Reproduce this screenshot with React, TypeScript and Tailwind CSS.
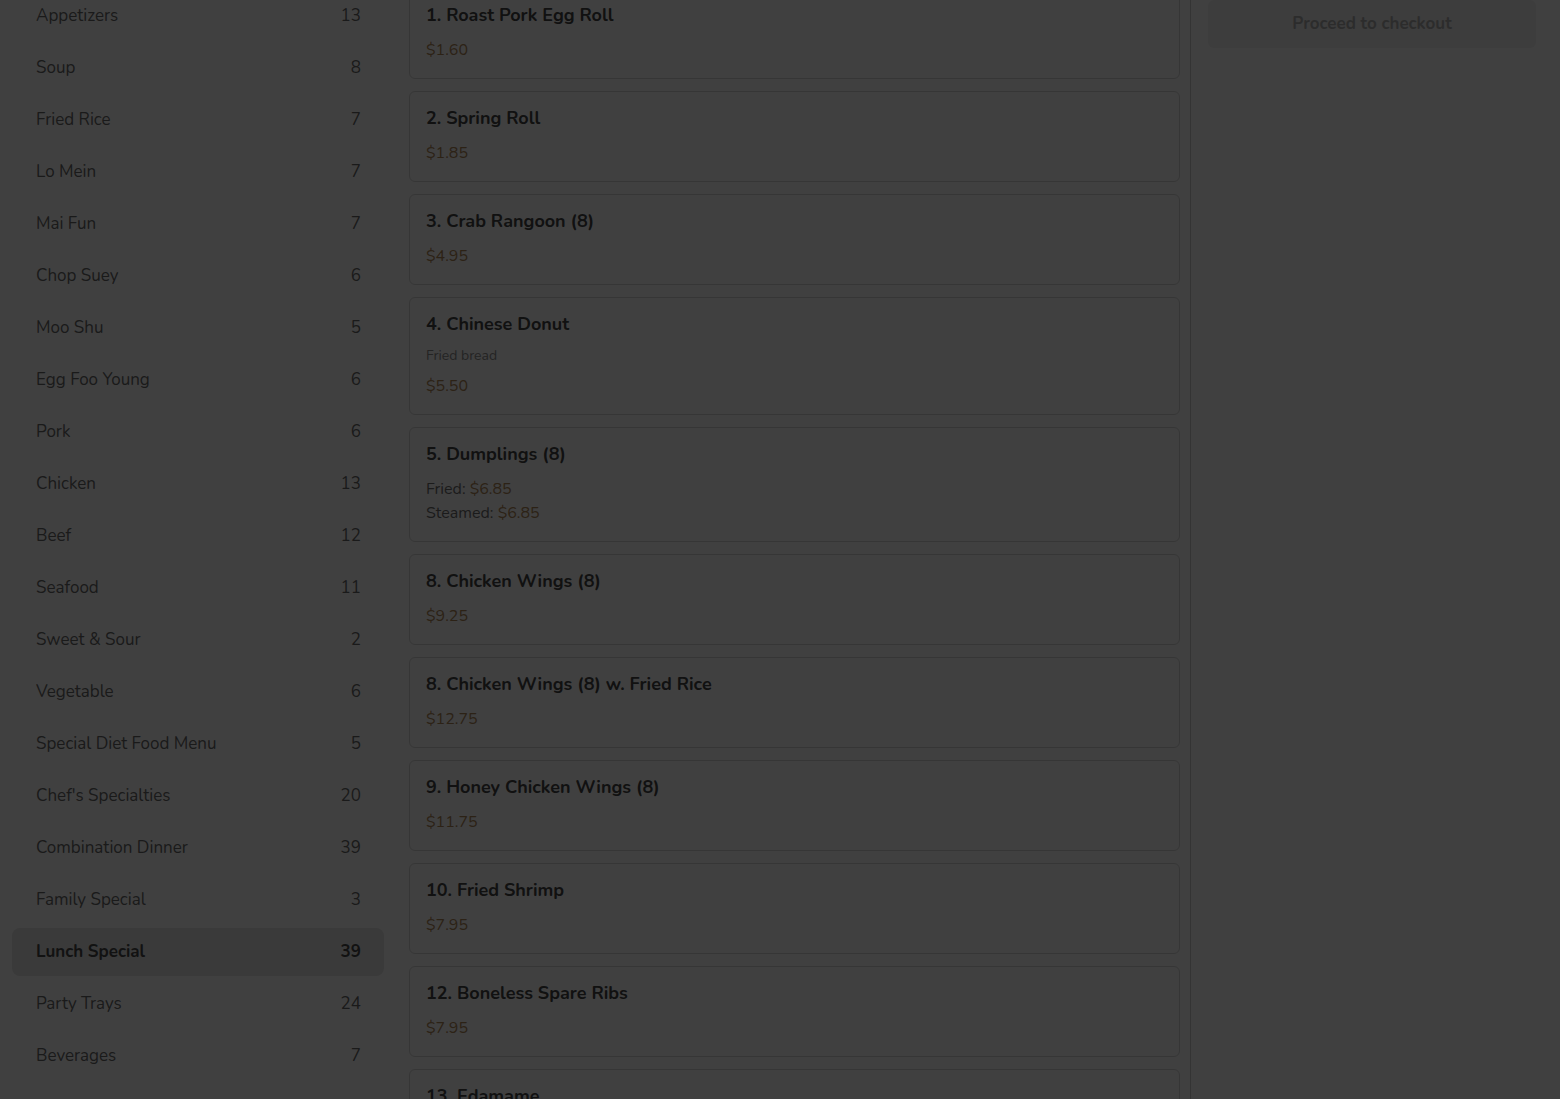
import * as React from "react";

type Item = { name: string; desc?: string; price?: string; options?: { label: string; price: string }[] };

const categories: [string, number][] = [
  ["Appetizers", 13],
  ["Soup", 8],
  ["Fried Rice", 7],
  ["Lo Mein", 7],
  ["Mai Fun", 7],
  ["Chop Suey", 6],
  ["Moo Shu", 5],
  ["Egg Foo Young", 6],
  ["Pork", 6],
  ["Chicken", 13],
  ["Beef", 12],
  ["Seafood", 11],
  ["Sweet & Sour", 2],
  ["Vegetable", 6],
  ["Special Diet Food Menu", 5],
  ["Chef's Specialties", 20],
  ["Combination Dinner", 39],
  ["Family Special", 3],
  ["Lunch Special", 39],
  ["Party Trays", 24],
  ["Beverages", 7],
];

const items: Item[] = [
  { name: "1. Roast Pork Egg Roll", price: "$1.60" },
  { name: "2. Spring Roll", price: "$1.85" },
  { name: "3. Crab Rangoon (8)", price: "$4.95" },
  { name: "4. Chinese Donut", desc: "Fried bread", price: "$5.50" },
  {
    name: "5. Dumplings (8)",
    options: [
      { label: "Fried", price: "$6.85" },
      { label: "Steamed", price: "$6.85" },
    ],
  },
  { name: "8. Chicken Wings (8)", price: "$9.25" },
  { name: "8. Chicken Wings (8) w. Fried Rice", price: "$12.75" },
  { name: "9. Honey Chicken Wings (8)", price: "$11.75" },
  { name: "10. Fried Shrimp", price: "$7.95" },
  { name: "12. Boneless Spare Ribs", price: "$7.95" },
  { name: "13. Edamame", price: "$5.95" },
];

export default function App() {
  return (
    <div className="relative h-[1099px] overflow-hidden bg-white font-['Nunito','Lato',sans-serif]">
      <div className="flex -mt-[12px]">
        {/* category sidebar */}
        <aside className="ml-3 w-[372px] shrink-0 pt-[4px]">
          {categories.map(([name, count]) => {
            const active = name === "Lunch Special";
            return (
              <div
                key={name}
                className={`mb-1 flex h-12 items-center justify-between rounded-lg pl-6 pr-[23px] text-[17px] ${
                  active ? "bg-[#e6e6e6] font-bold text-[#4a4a4a]" : "text-[#6a6a6a]"
                }`}
              >
                <span>{name}</span>
                <span>{count}</span>
              </div>
            );
          })}
        </aside>

        {/* menu items */}
        <main className="ml-[25px] flex w-[771px] shrink-0 flex-col gap-3">
          {items.map((item) => (
            <div key={item.name} className="rounded-md border border-[#d6d6d6] px-4 pb-4 pt-[14px]">
              <h3 className="text-[18px] font-bold leading-6 text-[#454545]">{item.name}</h3>
              {item.desc && <p className="mt-[10px] text-[14px] leading-5 text-[#8e8e8e]">{item.desc}</p>}
              {item.price && (
                <p className={`${item.desc ? "mt-[8px]" : "mt-[11px]"} text-[16px] leading-6 text-[#b08758]`}>
                  {item.price}
                </p>
              )}
              {item.options && (
                <div className="mt-[11px]">
                  {item.options.map((o) => (
                    <p key={o.label} className="text-[16px] leading-6 text-[#6e6e6e]">
                      {o.label}: <span className="text-[#b08758]">{o.price}</span>
                    </p>
                  ))}
                </div>
              )}
            </div>
          ))}
        </main>

        {/* cart */}
        <aside className="ml-[10px] min-h-[1120px] flex-1 border-l border-[#cfcfcf] pl-[17px] pr-6 pt-[12px]">
          <button className="h-12 w-full rounded-md bg-[#f3f3f3] text-[17px] font-bold text-[#b0b0b0]">
            Proceed to checkout
          </button>
        </aside>
      </div>

      {/* modal backdrop */}
      <div className="absolute inset-0 bg-black/75" />
    </div>
  );
}
